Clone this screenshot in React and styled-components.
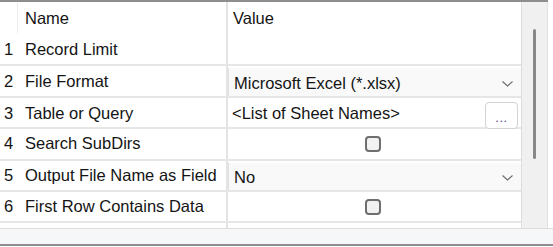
import React from 'react'
import styled, { createGlobalStyle } from 'styled-components'

const GlobalStyle = createGlobalStyle`
    html, body {
        margin: 0;
        padding: 0;
        background: #fff;
    }
    * {
        box-sizing: border-box;
    }
`

const rows = [
    { n: 1, name: 'Record Limit', kind: 'empty' },
    { n: 2, name: 'File Format', kind: 'select', value: 'Microsoft Excel (*.xlsx)' },
    { n: 3, name: 'Table or Query', kind: 'browse', value: '<List of Sheet Names>' },
    { n: 4, name: 'Search SubDirs', kind: 'check' },
    { n: 5, name: 'Output File Name as Field', kind: 'select', value: 'No' },
    { n: 6, name: 'First Row Contains Data', kind: 'check' },
    { n: '', name: '', kind: 'empty' },
]

function Chevron() {
    return (
        <svg width="11" height="6" viewBox="0 0 11 6">
            <polyline points="0.5,0.5 5.5,5 10.5,0.5" fill="none" stroke="#6a6a6a" strokeWidth="1.1" />
        </svg>
    )
}

function ValueCell({ row }) {
    if (row.kind === 'select') {
        return (
            <Select>
                <span>{row.value}</span>
                <Chevron />
            </Select>
        )
    }
    if (row.kind === 'browse') {
        return (
            <Browse>
                <span>{row.value}</span>
                <DotsButton>...</DotsButton>
            </Browse>
        )
    }
    if (row.kind === 'check') {
        return (
            <CheckCell>
                <Checkbox />
            </CheckCell>
        )
    }
    return <Value />
}

export default function App() {
    return (
        <>
            <GlobalStyle />
            <Frame>
                <Main>
                    <Grid>
                        <Header>
                            <HeadNum />
                            <Name>Name</Name>
                            <Value>Value</Value>
                        </Header>
                        {rows.map((row, i) => (
                            <Row key={i}>
                                <Num>{row.n}</Num>
                                <Name>{row.name}</Name>
                                <ValueCell row={row} />
                            </Row>
                        ))}
                    </Grid>
                    <Scrollbar>
                        <Thumb />
                    </Scrollbar>
                </Main>
                <Footer />
            </Frame>
        </>
    )
}

const Frame = styled.div`
    width: 553px;
    height: 247px;
    display: flex;
    flex-direction: column;
    font-family: "Liberation Sans", Arial, sans-serif;
    font-size: 16.5px;
    color: #141414;
`
const Main = styled.div`
    width: 548px;
    height: 228px;
    display: flex;
    border-top: 2px solid #8e8e8e;
    overflow: hidden;
`
const Grid = styled.div`
    width: 522px;
    height: 100%;
    border-right: 1px solid #dcdcdc;
    overflow: hidden;
`
const Header = styled.div`
    display: grid;
    grid-template-columns: 18px 210px 1fr;
    height: 33px;
    align-items: stretch;
`
const Row = styled.div`
    display: grid;
    grid-template-columns: 18px 210px 1fr;
    height: 31.4px;
    border-bottom: 2px solid #e6e6e6;
    align-items: stretch;
    flex-shrink: 0;
`
const HeadNum = styled.div`
    border-right: 1px solid #ececec;
    margin: 1px 0 2px;
`
const Num = styled.div`
    display: flex;
    align-items: center;
    padding-left: 4px;
`
const Name = styled.div`
    display: flex;
    align-items: center;
    padding-left: 7px;
    border-right: 2px solid #e4e4e4;
    white-space: nowrap;
    overflow: hidden;
`
const Value = styled.div`
    display: flex;
    align-items: center;
    padding-left: 5px;
    white-space: nowrap;
    overflow: hidden;
`
const Select = styled.div`
    display: flex;
    align-items: center;
    justify-content: space-between;
    padding: 3px 8px 0 5px;
    margin-top: 2px;
    background: #f9f9f9;
    border-left: 1px solid #e2e2e2;
    white-space: nowrap;
`
const Browse = styled.div`
    display: flex;
    align-items: center;
    justify-content: space-between;
    padding: 0 3px 0 4px;
    white-space: nowrap;
`
const DotsButton = styled.div`
    width: 33px;
    height: 27px;
    margin-top: 4px;
    border: 1px solid #d3d3d3;
    border-radius: 4px;
    background: #fff;
    color: #55438c;
    font-size: 13px;
    display: flex;
    align-items: flex-end;
    justify-content: center;
    padding-bottom: 3px;
    letter-spacing: 0.5px;
`
const CheckCell = styled.div`
    display: flex;
    align-items: center;
    justify-content: center;
    padding-right: 4px;
`
const Checkbox = styled.div`
    width: 16px;
    height: 16px;
    border: 2px solid #6e6e6e;
    border-radius: 4px;
    background: #f2f2f2;
`
const Scrollbar = styled.div`
    width: 26px;
    height: 100%;
    background: #f0f0f0;
    border-right: 1px solid #e2e2e2;
    display: flex;
    justify-content: center;
    padding-top: 27px;
`
const Thumb = styled.div`
    width: 3px;
    height: 130px;
    border-radius: 2px;
    background: #878787;
`
const Footer = styled.div`
    height: 18px;
    background: #f6f7f9;
    border-top: 1px solid #dcdcdc;
    border-bottom: 2px solid #8e8e8e;
`
